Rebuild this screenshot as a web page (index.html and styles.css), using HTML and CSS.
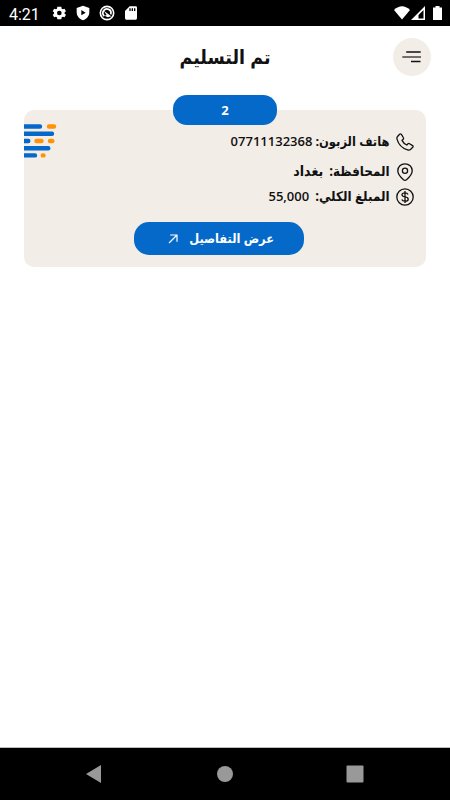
FILE: index.html
```
<!DOCTYPE html>
<html lang="ar">
<head>
    <meta charset="UTF-8">
    <meta name="viewport" content="width=device-width, initial-scale=1.0">
    <title>تم التسليم</title>
    <link rel="stylesheet" href="styles.css">
</head>
<body>
    <div class="status-bar">
        <span class="time">4:21</span>
        <svg class="status-icon" viewBox="0 0 24 24"><path fill-rule="evenodd" d="M20.400 13a8 8 0 0 0 0-2l2.100-1.700-2.200-3.800-2.500 1a8 8 0 0 0-1.800-1L15.500 2.500h-6l-.5 3a8 8 0 0 0-1.800 1l-2.500-1-2.200 3.800L4.600 11a8 8 0 0 0 0 2l-2.100 1.700 2.200 3.800 2.500-1a8 8 0 0 0 1.800 1l.5 3h6l.5-3a8 8 0 0 0 1.800-1l2.500 1 2.200-3.800zM12.500 8.500a3.500 3.500 0 1 1 0 7 3.500 3.500 0 0 1 0-7z"/></svg>
        <svg class="status-icon" viewBox="0 0 24 24"><path fill-rule="evenodd" d="M12 1 21.500 4.500V11c0 5.500-4 10.200-9.500 12-5.500-1.800-9.500-6.500-9.500-12V4.500zM9.500 7.500v8l6.500-4z"/></svg>
        <svg class="status-icon" viewBox="0 0 24 24"><circle cx="12" cy="12" r="10" fill="none" stroke="#fff" stroke-width="2.400"/><path fill="none" stroke="#fff" stroke-width="2.600" d="M8 16.500A6 6 0 1 1 17.500 14"/><path d="M7 8.500 18.500 17 13 18.500 8.500 16l3-1z"/></svg>
        <svg class="status-icon" viewBox="0 0 24 24"><path fill-rule="evenodd" d="M10 2h9a2 2 0 0 1 2 2v16a2 2 0 0 1-2 2H5a2 2 0 0 1-2-2V9zM9.500 5v4h2V5zm3.500 0v4h2V5zm3.500 0v4h2V5z"/></svg>
        <svg class="signals" viewBox="0 0 50 16"><path d="M0 4Q8-3.500 16 4L8 13.500z"/><path d="M31 0v14H17zM29.500 4l-5 5v3.500h5z" fill-rule="evenodd"/><path d="M39 1.500h2.500V0h4v1.500H48V14h-9z"/></svg>
    </div>

    <header class="header" dir="rtl">
        <h1>تم التسليم</h1>
        <button class="menu-btn" aria-label="القائمة">
            <svg width="38" height="38" viewBox="0 0 38 38"><path d="M13.200 14h14.500M18 23.500h9.500"/><path class="middle" d="M9.300 19H28"/></svg>
        </button>
    </header>

    <main class="card" dir="rtl">
        <div class="badge">2</div>
        <svg class="pattern" width="33" height="35" viewBox="0 0 33 35">
            <g stroke-width="4.400" stroke-linecap="round">
                <path stroke="#0569c9" d="M-3 2.500h19M-3 9.700h31M-3 17H4.300M-3 24.200h27.300M-3 31.400h14"/>
                <path stroke="#ff9205" d="M25 2.500h5M12.500 17h5M26 17h2.300M18.800 31.400h.700"/>
            </g>
        </svg>

        <ul class="info">
            <li class="phone">
                <svg class="icon" viewBox="0 0 18 18"><path d="M1.300 3.800 3.600 1.300Q4.500.500 5.400 1.400L7.300 4.500Q7.900 5.400 7.200 6.200L6 7.400Q7.500 10.500 10.800 12L12 10.700Q12.700 10 13.600 10.700L16.600 12.600Q17.500 13.400 16.700 14.300L14.500 16.500Q13.500 17.400 11.600 16.900C6.700 15.500 2.500 11.400 1.100 6.400Q.600 4.700 1.300 3.800z"/></svg>
                <span class="label">هاتف الزبون:</span>
                <span class="number">07711132368</span>
            </li>
            <li class="city">
                <svg class="icon" viewBox="0 0 18 18"><path d="M9 .800c-4.100 0-7.200 3-7.200 7 0 4 3.800 7.300 5.700 8.900q1.500 1.200 3 0c1.900-1.600 5.700-4.900 5.700-8.900 0-4-3.100-7-7.200-7z"/><circle cx="9" cy="7.700" r="2.600"/></svg>
                <span class="label">المحافظة:</span>
                <span class="value">بغداد</span>
            </li>
            <li class="total">
                <svg class="icon" viewBox="0 0 18 18"><circle cx="9" cy="9" r="8.200"/><path d="M12 6.400Q11.300 4.800 9 4.800q-3 0-3 2 0 1.600 3 2.100 3.200.500 3.200 2.300 0 2-3.200 2-2.500 0-3.200-1.700M9 3v12"/></svg>
                <span class="label">المبلغ الكلي:</span>
                <span class="number">55,000</span>
            </li>
        </ul>

        <button class="details-btn">
            <span>عرض التفاصيل</span>
            <svg width="10" height="10" viewBox="0 0 10 10"><path d="M1 9 9 1M2.200 1H9v6.800"/></svg>
        </button>
    </main>

    <nav class="nav-bar">
        <svg width="18" height="20" viewBox="0 0 18 20"><path d="M1 10 16 1v18z"/></svg>
        <svg width="18" height="20" viewBox="0 0 18 20"><circle cx="9" cy="10" r="8"/></svg>
        <svg width="18" height="20" viewBox="0 0 18 20"><rect x=".5" y="1.500" width="17" height="17" rx="1"/></svg>
    </nav>
</body>
</html>
```

FILE: styles.css
```
* {
    box-sizing: border-box;
}

body {
    margin: 0;
    height: 100vh;
    display: flex;
    flex-direction: column;
    background: #fff;
    color: #111;
    font-family: "Open Sans", "DejaVu Sans Condensed", "DejaVu Sans", sans-serif;
    overflow: hidden;
}

button {
    border: 0;
    padding: 0;
    font-family: inherit;
}

.status-bar {
    display: flex;
    align-items: center;
    height: 26px;
    padding: 0 8px 0 9px;
    background: #000;
    color: #fff;
    fill: #fff;
    flex-shrink: 0;
}

.time {
    width: 41.5px;
    font: 16px Roboto, sans-serif;
    padding-top: 2px;
}

.status-icon {
    width: 16px;
    height: 16px;
    margin-right: 8px;
}

.signals {
    width: 50px;
    height: 16px;
    margin: 2px -2px 0 auto;
}

.header {
    display: grid;
    grid-template-columns: 38px 1fr 38px;
    align-items: center;
    height: 62px;
    padding: 0 19px;
    flex-shrink: 0;
}

.header h1 {
    grid-column: 2;
    grid-row: 1;
    margin: 0;
    font-size: 19.5px;
    font-weight: bold;
    line-height: 30px;
    text-align: center;
    white-space: nowrap;
}

.menu-btn {
    grid-column: 1;
    grid-row: 1;
    width: 38px;
    height: 38px;
    border-radius: 50%;
    background: #f2ede7;
}

.menu-btn svg {
    display: block;
    fill: none;
    stroke: #111;
    stroke-width: 1.5;
}

.menu-btn .middle {
    stroke: #444;
}

.card {
    position: relative;
    height: 157px;
    margin: 22px 24px 0;
    padding-top: 19px;
    border-radius: 10px;
    background: #f2ede7;
    flex-shrink: 0;
}

.badge {
    position: absolute;
    top: -15px;
    left: 149px;
    width: 104px;
    height: 30px;
    border-radius: 14px;
    background: #0569c9;
    color: #fff;
    font-size: 13px;
    font-weight: bold;
    line-height: 30px;
    text-align: center;
}

.pattern {
    position: absolute;
    top: 14px;
    left: 0;
}

.info {
    margin: 0;
    padding: 0 12.5px 0 0;
    list-style: none;
    font-size: 13.3px;
    font-weight: bold;
    line-height: 20px;
}

.info li {
    display: flex;
    align-items: center;
    height: 25px;
    white-space: nowrap;
}

.info .phone {
    margin-bottom: 5px;
}

.info span {
    padding-bottom: 2px;
}

.icon {
    width: 18px;
    height: 18px;
    margin-left: 6px;
    fill: none;
    stroke: #111;
    stroke-width: 1.3;
    stroke-linejoin: round;
}

.label {
    margin-left: 6px;
}

.phone .label {
    margin-left: 3px;
    font-size: 12.8px;
}

.value {
    font-size: 14px;
}

.number {
    font-size: 13px;
    font-weight: 600;
}

.details-btn {
    display: flex;
    align-items: center;
    width: 170px;
    height: 33px;
    margin: 13px 122px 0 0;
    padding-right: 30px;
    border-radius: 15px;
    background: #0569c9;
    color: #fff;
    font-size: 12.7px;
    font-weight: bold;
    white-space: nowrap;
}

.details-btn span {
    padding-bottom: 2px;
}

.details-btn svg {
    margin-right: 11px;
    fill: none;
    stroke: #fff;
    stroke-width: 1.2;
}

.nav-bar {
    display: flex;
    justify-content: space-between;
    align-items: center;
    height: 53px;
    margin-top: auto;
    padding: 0 86px 0 85px;
    border-top: 1px solid #bbb;
    background: #000;
    fill: #999;
    flex-shrink: 0;
}
```
